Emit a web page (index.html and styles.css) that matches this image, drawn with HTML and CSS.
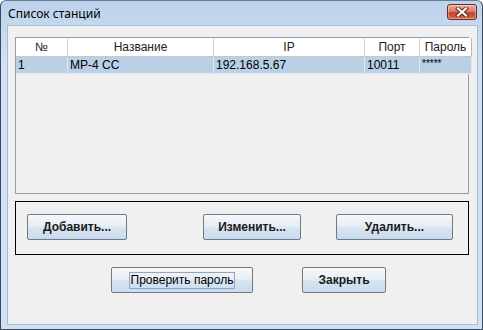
FILE: index.html
```html
<!DOCTYPE html>
<html lang="ru">
<head>
    <meta charset="UTF-8">
    <meta name="viewport" content="width=device-width, initial-scale=1.0">
    <title>Список станций</title>
    <link rel="stylesheet" href="styles.css">
</head>
<body>

    <div class="window">
        <div class="titlebar">
            <span class="title">Список станций</span>
            <button class="close-btn" title="Закрыть">
                <svg width="14" height="10" viewBox="0 0 14 10">
                    <path d="M3 1.5 L11 8.5 M11 1.5 L3 8.5" stroke="#5a2418" stroke-width="4" stroke-linecap="square"/>
                    <path d="M3 1.5 L11 8.5 M11 1.5 L3 8.5" stroke="#ffffff" stroke-width="2.2" stroke-linecap="square"/>
                </svg>
            </button>
        </div>

        <div class="content">
            <!-- список станций -->
            <div class="table-pane">
                <table class="stations">
                    <thead>
                        <tr>
                            <th class="col-num">№</th>
                            <th class="col-name">Название</th>
                            <th class="col-ip">IP</th>
                            <th class="col-port">Порт</th>
                            <th class="col-pass">Пароль</th>
                        </tr>
                    </thead>
                    <tbody>
                        <tr class="selected">
                            <td>1</td>
                            <td>MP-4 CC</td>
                            <td>192.168.5.67</td>
                            <td>10011</td>
                            <td class="stars">*****</td>
                        </tr>
                    </tbody>
                </table>
            </div>

            <!-- действия над станцией -->
            <div class="actions-box">
                <button class="btn btn-add">Добавить...</button>
                <button class="btn btn-edit">Изменить...</button>
                <button class="btn btn-delete">Удалить...</button>
            </div>

            <div class="footer-buttons">
                <button class="btn btn-check"><span class="focus">Проверить пароль</span></button>
                <button class="btn btn-close">Закрыть</button>
            </div>
        </div>
    </div>

</body>
</html>
```

FILE: styles.css
```css
body {
    margin: 0;
    padding: 0;
    background-color: #ffffff;
    font-family: "Liberation Sans", Arial, sans-serif;
}

.window {
    width: 483px;
    height: 330px;
    box-sizing: border-box;
    border: 1px solid #3a4a5c;
    border-top-color: #6a7d92;
    border-radius: 6px 6px 0 0;
    background: linear-gradient(to bottom, #bcd2ea 0px, #c4d8ee 24px, #cfe1f3 60px, #cfe1f3 100%);
    display: flex;
    flex-direction: column;
    overflow: hidden;
}

.titlebar {
    height: 24px;
    display: flex;
    align-items: flex-start;
    padding-left: 7px;
    padding-right: 5px;
}

.title {
    font-family: "Noto Sans", "Open Sans", sans-serif;
    font-size: 12px;
    color: #000;
    margin-top: 4px;
}

.close-btn {
    margin-left: auto;
    margin-top: 3px;
    width: 30px;
    height: 16px;
    padding: 0;
    border: 1px solid #6c2c22;
    border-radius: 3px;
    background: linear-gradient(to bottom, #eab0a2 0%, #d97b66 45%, #c4442c 55%, #d2684e 100%);
    display: flex;
    align-items: center;
    justify-content: center;
    box-shadow: inset 0 0 0 1px rgba(255, 255, 255, 0.35);
}

.content {
    flex: 1;
    margin: 0 4px 4px 6px;
    border: 1px solid #a7bcd3;
    background-color: #f0f0f0;
    padding: 11px 8px 0 7px;
}

.table-pane {
    height: 157px;
    box-sizing: border-box;
    border: 1px solid #8c9cac;
    background-color: #f0f0f0;
}

.stations {
    border-collapse: collapse;
    table-layout: fixed;
    width: 451px;
    font-size: 12px;
    color: #000;
}

.stations th {
    height: 18px;
    padding: 0;
    background-color: #ffffff;
    font-weight: normal;
    color: #222;
    text-align: center;
    border-right: 1px solid #d5d5d5;
    border-bottom: 1px solid #c8c8c8;
}

.stations th:last-child {
    border-right: 1px solid #b8b8b8;
}

.col-num { width: 51px; }
.col-name { width: 145px; }
.col-ip { width: 150px; }
.col-port { width: 54px; }
.col-pass { width: 51px; }

.stations td {
    height: 16px;
    padding: 0 2px;
    border-right: 1px solid #e2e8ee;
    border-bottom: 1px solid #e2e8ee;
    white-space: nowrap;
    overflow: hidden;
}

.selected td {
    background-color: #b9d0e7;
}

.stars {
    font-size: 10px;
    vertical-align: top;
    line-height: 14px;
}

.actions-box {
    margin-top: 7px;
    height: 54px;
    box-sizing: border-box;
    border: 1px solid #000;
    display: flex;
    align-items: flex-start;
    padding-top: 12px;
}

.btn {
    height: 26px;
    box-sizing: border-box;
    border: 1px solid #707a86;
    border-radius: 2px;
    background: linear-gradient(to bottom, #f6f8fa 0%, #e8eef4 45%, #d6e4f1 55%, #c8dbee 100%);
    font-family: "Liberation Sans", Arial, sans-serif;
    font-size: 12px;
    font-weight: bold;
    color: #1a1a1a;
    padding: 0;
    cursor: pointer;
}

.btn-add {
    width: 100px;
    margin-left: 11px;
}

.btn-edit {
    width: 98px;
    margin-left: 76px;
}

.btn-delete {
    width: 117px;
    margin-left: 35px;
}

.footer-buttons {
    display: flex;
    margin-top: 12px;
    padding-left: 96px;
}

.btn-check {
    width: 142px;
    font-weight: normal;
    color: #000;
    display: flex;
    align-items: center;
    justify-content: center;
}

.btn-check .focus {
    border: 1px solid #8fa6bf;
    padding: 1px 1px;
    line-height: 13px;
}

.btn-close {
    width: 84px;
    margin-left: 49px;
}
```
